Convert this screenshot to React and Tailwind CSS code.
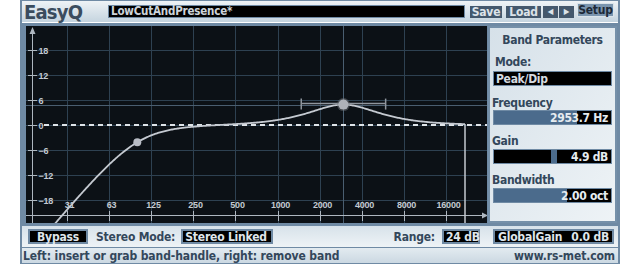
import React from 'react';

// EasyQ plugin editor mock

const X0 = 66.5; // x of 31.25 Hz
const OCT = 42.2; // px per octave
const ZERO_Y = 125;
const PX_PER_DB = 25 / 6;

const freqToX = (f) => X0 + OCT * Math.log2(f / 31.25);
const xToFreq = (x) => 31.25 * Math.pow(2, (x - X0) / OCT);
const dbToY = (db) => ZERO_Y - db * PX_PER_DB;

function responseDb(f) {
  // 2nd order low cut at 100 Hz
  const r = f / 100;
  const q = 0.62;
  const hp = 10 * Math.log10(r ** 4 / ((1 - r * r) ** 2 + (r / q) ** 2));
  // peak/dip band
  const w = f / 2953.7;
  const A = Math.pow(10, 4.9 / 40);
  const Q = 2 / 3;
  const a = (1 - w * w) ** 2;
  const num = a + ((w * A) / Q) ** 2;
  const den = a + (w / (A * Q)) ** 2;
  return hp + 10 * Math.log10(num / den);
}

function curvePath() {
  const pts = [];
  for (let x = 40; x <= 465; x += 1) {
    const y = Math.min(240, dbToY(responseDb(xToFreq(x))));
    pts.push(`${x},${y.toFixed(2)}`);
  }
  return 'M' + pts.join(' L');
}

const gridX = [0, 1, 2, 3, 4, 5, 6, 7, 8, 9].map((k) => Math.round(X0 + OCT * k) + 0.5);
const freqLabels = ['31', '63', '125', '250', '500', '1000', '2000', '4000', '8000', '16000'];
const dbLevels = [18, 12, 6, 0, -6, -12, -18];

function Graph() {
  const peakX = freqToX(2953.7);
  const peakY = dbToY(responseDb(2953.7));
  const hpX = freqToX(100);
  const hpY = dbToY(responseDb(100));
  return (
    <svg width="461" height="197" viewBox="26 26 461 197" className="block bg-[#0c1116]">
      {dbLevels.map((d) => (
        <line key={d} x1="26" x2="487" y1={dbToY(d) + 0.5} y2={dbToY(d) + 0.5} stroke="#2e4151" strokeWidth="1" />
      ))}
      {gridX.map((x) => (
        <line key={x} x1={x} x2={x} y1="26" y2="223" stroke="#2e4151" strokeWidth="1" />
      ))}
      {/* band crosshair */}
      <line x1={Math.round(peakX) + 0.5} x2={Math.round(peakX) + 0.5} y1="26" y2="223" stroke="#4a5e70" strokeWidth="1" />
      <line x1="26" x2="487" y1={Math.round(peakY) + 0.5} y2={Math.round(peakY) + 0.5} stroke="#4a5e70" strokeWidth="1" />

      {/* y axis */}
      <line x1="32.5" x2="32.5" y1="31" y2="223" stroke="#aeb7c0" strokeWidth="1" />
      <polygon points="32.5,27 29.5,34 35.5,34" fill="#aeb7c0" />
      {dbLevels.map((d) => (
        <g key={d}>
          <line x1="28" x2="37" y1={dbToY(d) + 0.5} y2={dbToY(d) + 0.5} stroke="#aeb7c0" strokeWidth="1" />
          <text x="38.5" y={dbToY(d) + 4} fontSize="9" fill="#c3cad2" fontFamily="Liberation Sans, Arial, sans-serif">
            {d < 0 ? `−${-d}` : d}
          </text>
        </g>
      ))}

      {/* x axis */}
      <line x1="26" x2="483" y1="215.5" y2="215.5" stroke="#aeb7c0" strokeWidth="1" />
      <polygon points="488,215.5 482,212.5 482,218.5" fill="#aeb7c0" />
      {gridX.map((x, i) => (
        <g key={x}>
          <line x1={x} x2={x} y1="211" y2="221" stroke="#aeb7c0" strokeWidth="1" />
          <text x={x + 2} y="208" fontSize="9" textAnchor="middle" fill="#c3cad2" fontFamily="Liberation Sans, Arial, sans-serif">
            {freqLabels[i]}
          </text>
        </g>
      ))}

      {/* 0 dB dashed line */}
      <line x1="44" x2="487" y1="125" y2="125" stroke="#dfe4e8" strokeWidth="2" strokeDasharray="5 4" />

      {/* response */}
      <path d={curvePath()} fill="none" stroke="#c5cad1" strokeWidth="1.8" />
      <line x1="465" x2="465" y1={dbToY(responseDb(xToFreq(465)))} y2="223" stroke="#c5cad1" strokeWidth="1.5" />

      {/* bandwidth bar */}
      <line x1={freqToX(2953.7 / 2)} x2={freqToX(2953.7 * 2)} y1={peakY - 1} y2={peakY - 1} stroke="#8e959d" strokeWidth="1.5" />
      <line x1={freqToX(2953.7 / 2)} x2={freqToX(2953.7 / 2)} y1={peakY - 6} y2={peakY + 5} stroke="#8e959d" strokeWidth="1.5" />
      <line x1={freqToX(2953.7 * 2)} x2={freqToX(2953.7 * 2)} y1={peakY - 6} y2={peakY + 5} stroke="#8e959d" strokeWidth="1.5" />

      {/* handles */}
      <circle cx={hpX} cy={hpY} r="4" fill="#b8bcc4" />
      <circle cx={peakX} cy={peakY} r="6.5" fill="#6f737a" opacity="0.5" />
      <circle cx={peakX} cy={peakY} r="5" fill="#aeb2b9" />
    </svg>
  );
}

function Slider({ fill, from = 0, children }) {
  return (
    <div className="relative h-[15px] mx-[3px] bg-black border border-[#6f8aa4]">
      <div className="absolute top-0 bottom-0 bg-[#4b6b8c]" style={{ left: `${from}%`, width: `${fill}%` }} />
      <div className="relative h-full flex items-center justify-end pr-[3px] text-[12px] leading-none text-[#e6ecf0]">
        {children}
      </div>
    </div>
  );
}

function DarkBox({ className = '', children }) {
  return (
    <div className={`h-[15px] flex items-center whitespace-nowrap bg-black border-2 border-[#6f8aa4] text-[12px] leading-none text-[#dfe5ea] ${className}`}>
      {children}
    </div>
  );
}

export default function App() {
  return (
    <div className="w-[640px] h-[264px] bg-white pl-[20px] font-['DejaVu_Sans_Condensed','DejaVu_Sans',sans-serif] font-bold text-[#33475b] tracking-[-0.2px] whitespace-nowrap">
      <div className="w-[600px] h-[264px] bg-[#6f8aa4] flex flex-col px-[2px] pt-[1px]">
        {/* header */}
        <div className="h-[22px] flex items-center bg-linear-to-b from-[#eef3f6] to-[#c5d4df] border-b border-white">
          <div className="w-[86px] pl-[2px] text-[20px] leading-none text-[#3a4c5e] tracking-[-0.8px]">EasyQ</div>
          <div className="w-[357px] h-[13px] flex items-center bg-black border border-[#6f8aa4] pl-[2px] text-[11.5px] leading-none text-[#cdd4da]">
            LowCutAndPresence*
          </div>
          <div className="ml-[5px] w-[32px] h-[12px] flex items-center justify-center bg-[#44586d] text-[12px] leading-none text-[#dce3e9]">Save</div>
          <div className="ml-[4px] w-[35px] h-[12px] flex items-center justify-center bg-[#44586d] text-[12px] leading-none text-[#dce3e9]">Load</div>
          <div className="ml-[2px] w-[15px] h-[12px] flex items-center justify-center bg-[#44586d] text-[8px] leading-none text-[#dce3e9]">◀</div>
          <div className="ml-[1px] w-[15px] h-[12px] flex items-center justify-center bg-[#44586d] text-[8px] leading-none text-[#dce3e9]">▶</div>
          <div className="ml-[3px] mb-[3px] w-[37px] h-[14px] flex items-center justify-center bg-[#7a95ae] border border-[#dbe4ea] text-[12px] leading-none text-[#1d2a38]">Setup</div>
        </div>

        {/* graph + band parameters */}
        <div className="mt-[3px] h-[197px] flex pl-[4px]">
          <Graph />
          <div className="ml-[1px] w-[129px] border-2 border-[#7590a9] bg-linear-to-br from-[#d6e1e9] to-[#eef3f6] flex flex-col text-[12px] leading-none tracking-[-0.3px]">
            <div className="mt-[6px] h-[13px] text-center">Band Parameters</div>
            <div className="mt-[9px] pl-[5px] h-[13px]">Mode:</div>
            <div className="mt-[2px] mx-[3px] h-[15px] flex items-center bg-black border border-[#6f8aa4] pl-[2px] text-[12px] leading-none text-[#d5dbe0]">
              Peak/Dip
            </div>
            <div className="mt-[11px] pl-[2px] h-[12px]">Frequency</div>
            <div className="mt-[1px]">
              <Slider fill={71}>2953.7 Hz</Slider>
            </div>
            <div className="mt-[10px] pl-[2px] h-[13px]">Gain</div>
            <div className="mt-[1px]">
              <Slider fill={5} from={49}>4.9 dB</Slider>
            </div>
            <div className="mt-[10px] pl-[2px] h-[13px]">Bandwidth</div>
            <div className="mt-[1px]">
              <Slider fill={62}>2.00 oct</Slider>
            </div>
          </div>
        </div>

        {/* bottom controls */}
        <div className="mt-[3px] h-[21px] flex items-center bg-linear-to-b from-[#d7e2ea] to-[#eef3f6] text-[12px] leading-none">
          <DarkBox className="ml-[6px] w-[60px] justify-center text-[#a9b5c1]">Bypass</DarkBox>
          <div className="ml-[8px]">Stereo Mode:</div>
          <DarkBox className="ml-[6px] w-[92px] pl-[2px]">Stereo Linked</DarkBox>
          <div className="ml-auto">Range:</div>
          <DarkBox className="ml-[7px] w-[38px] pl-[2px]">24 dB</DarkBox>
          <DarkBox className="ml-[13px] mr-[4px] w-[121px] px-[3px] justify-between">
            <span>GlobalGain</span>
            <span>0.0 dB</span>
          </DarkBox>
        </div>

        {/* status line */}
        <div className="mt-[1px] h-[15px] flex items-center justify-between px-[1px] bg-linear-to-b from-[#e3ebf0] to-[#cbd8e2] text-[12px] leading-none tracking-[-0.1px]">
          <span>Left: insert or grab band-handle, right: remove band</span>
          <span className="mr-[2px]">www.rs-met.com</span>
        </div>
      </div>
    </div>
  );
}
